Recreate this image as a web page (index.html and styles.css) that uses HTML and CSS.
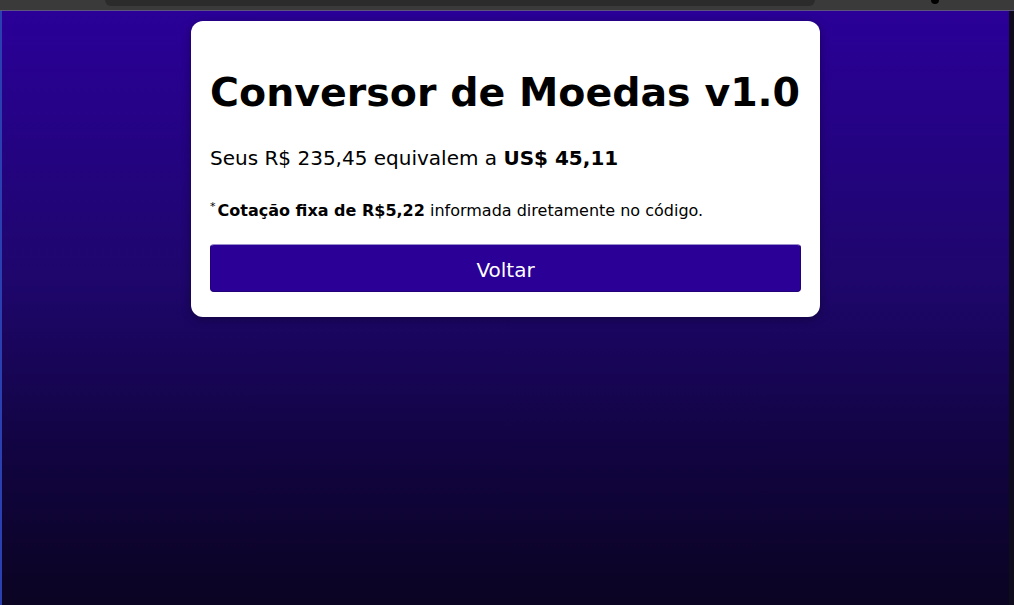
FILE: index.html
```html
<!DOCTYPE html>
<html lang="pt-BR">
<head>
<meta charset="utf-8">
<title>Conversor de Moedas</title>
<link rel="stylesheet" href="styles.css">
</head>
<body>
<div class="browser-bar"><div class="address"></div><div class="dot"></div></div>
<main class="page">
  <section class="card">
    <h1 class="title">Conversor de Moedas v1.0</h1>
    <p class="result">Seus R$ 235,45 equivalem a <strong>US$ 45,11</strong></p>
    <p class="note"><sup class="star">*</sup><strong>Cotação fixa de R$5,22</strong> informada diretamente no código.</p>
    <button class="btn">Voltar</button>
  </section>
</main>
</body>
</html>
```
FILE: styles.css
```css
* { box-sizing: border-box; }
html, body { margin: 0; height: 100%; }
body {
  font-family: "DejaVu Sans", Verdana, sans-serif;
  background: #0b0520;
  display: flex;
  flex-direction: column;
  overflow: hidden;
}
.browser-bar {
  height: 11px;
  background: #3a3a3a;
  border-bottom: 1px solid #5e5480;
  position: relative;
  flex: none;
}
.address {
  position: absolute;
  left: 105px;
  width: 710px;
  top: -8px;
  height: 14px;
  background: #2b2b2b;
  border-radius: 6px;
}
.dot {
  position: absolute;
  left: 931px;
  top: -4px;
  width: 8px;
  height: 8px;
  border-radius: 50%;
  background: #000;
}
.page {
  flex: 1;
  background: linear-gradient(180deg, #2a0098 0%, #1e066c 45%, #110440 75%, #0b0422 100%);
  border-left: 2px solid #2a3fb0;
  border-right: 5px solid #0d0b1c;
  display: flex;
  justify-content: center;
  align-items: flex-start;
  padding-top: 10px;
}
.card {
  width: 629px;
  background: #fff;
  border-radius: 12px;
  padding: 20px 19px 25px;
  box-shadow: 0 2px 10px rgba(0,0,0,0.35);
}
.title {
  font-size: 39.5px;
  font-weight: bold;
  line-height: 46px;
  margin: 28px 0 32px;
  color: #000;
  white-space: nowrap;
}
.result {
  font-size: 20px;
  line-height: 23px;
  margin: 0 0 31px;
  color: #000;
}
.note {
  font-size: 16px;
  line-height: 19px;
  margin: 0 0 24px;
  color: #000;
}
.star {
  font-size: 11px;
  line-height: 0;
  vertical-align: 6px;
  margin-right: 2px;
}
.btn {
  display: block;
  width: 100%;
  height: 48px;
  background: #2a0096;
  color: #fff;
  border: 1px solid #22007a;
  border-top-color: #9a8fcc;
  border-radius: 4px;
  font-family: "DejaVu Sans", Verdana, sans-serif;
  font-size: 20px;
  padding: 3px 0 0;
}
```
